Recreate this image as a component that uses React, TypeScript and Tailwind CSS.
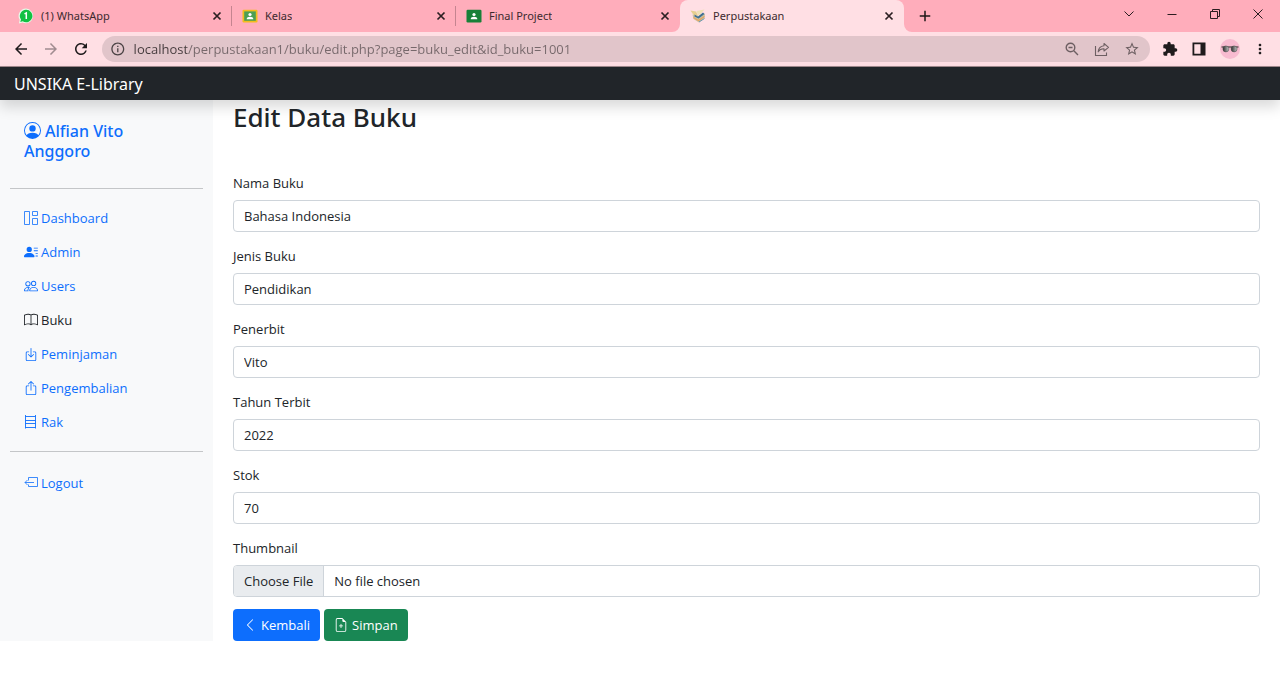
import React, { useState } from "react";
import {
  BsPersonCircle,
  BsPersonLinesFill,
  BsPeople,
  BsBook,
  BsBoxArrowInDown,
  BsBoxArrowUp,
  BsChevronLeft,
  BsFileEarmarkPlus,
} from "react-icons/bs";
import {
  MdArrowBack,
  MdArrowForward,
  MdRefresh,
  MdInfoOutline,
  MdStarBorder,
  MdExtension,
  MdMoreVert,
  MdAdd,
} from "react-icons/md";

function WhatsAppIcon() {
  return (
    <svg viewBox="0 0 16 16" className="size-4 shrink-0" aria-hidden="true">
      <path d="M8 .6A7.3 7.3 0 1 1 4.6 14.5L.9 15.4l.8-3.7A7.3 7.3 0 0 1 8 .6z" fill="#e9f9ea" />
      <path d="M8 1.7A6.3 6.3 0 1 1 4.7 13.3L2.3 14l.7-2.4A6.3 6.3 0 0 1 8 1.7z" fill="#12c143" />
      <path d="M6.500 5.900 8.300 4.900V11" fill="none" stroke="#fff" strokeWidth="1.500" />
    </svg>
  );
}

function ClassroomIcon({ framed }: { framed?: boolean }) {
  return (
    <svg viewBox="0 0 16 16" className="size-4 shrink-0" aria-hidden="true">
      <rect x="0.500" y="1.700" width="15" height="12.800" rx="1.200" fill={framed ? "#f1bd1c" : "#188038"} />
      {framed && <rect x="2.200" y="3.400" width="11.600" height="9.400" fill="#4c9f55" />}
      <circle cx="8" cy="6.500" r="1.600" fill="#fff" />
      <path d="M4.700 11.200c0-1.700 1.500-2.400 3.300-2.400s3.300.7 3.300 2.400z" fill="#fff" />
    </svg>
  );
}

function BooksIcon() {
  return (
    <svg viewBox="0 0 16 16" className="size-4 shrink-0" aria-hidden="true">
      <path d="M.5 2.500 6 3.500l2.500 5-5-1.500z" fill="#e6cf8f" />
      <path d="M2.500 6.500 8 9.500 15 5.500l-.5 4.500L9 14.500 3.500 11z" fill="#c9bfa0" />
      <path d="M4.500 6.500 8 8.500l5-4 1.500 1.500L8.500 10.500 4.500 8.500z" fill="#3d6f92" />
      <path d="M6.500 3 14.500 1.500 10.500 6 8 7.500z" fill="#efe0b4" />
      <path d="M3.500 9.500 8.500 12.500 14.500 8.500" fill="none" stroke="#e5a460" strokeWidth="1.200" />
      <path d="M9 14 14.500 10.500" stroke="#6797b0" strokeWidth="1" />
    </svg>
  );
}

function CloseIcon() {
  return (
    <svg viewBox="0 0 14 14" className="size-3.5" fill="none" stroke="currentColor" strokeWidth="1.700" aria-hidden="true">
      <path d="M3.500 3.500l7 7M10.500 3.500l-7 7" />
    </svg>
  );
}

function DashboardIcon() {
  return (
    <svg viewBox="0 0 14 14" className="size-3.5" fill="none" stroke="currentColor" aria-hidden="true">
      <path d="M.5.500h5v13h-5zM8.500.500h5v4h-5zM8.500 7.500h5v6h-5z" strokeWidth=".8" />
    </svg>
  );
}

function RackIcon() {
  return (
    <svg viewBox="0 0 14 14" className="size-3.5" fill="none" stroke="currentColor" aria-hidden="true">
      <path d="M1.500 0v13.500M11.500 0v13.500M1.500 1.500h10M1.500 5.500h10M1.500 8.500h10M1.500 12.500h10" strokeWidth=".9" />
    </svg>
  );
}

function LogoutIcon() {
  return (
    <svg viewBox="0 0 14 14" className="size-3.5" fill="none" stroke="currentColor" strokeWidth=".8" aria-hidden="true">
      <path d="M4.500 4.500v-3h9v9h-9v-2M10 6.500H1M3.500 4 1 6.500 3.500 9" />
    </svg>
  );
}

function ZoomOutIcon() {
  return (
    <svg viewBox="0 0 16 16" className="size-4" fill="none" stroke="currentColor" strokeWidth="1.400" aria-hidden="true">
      <circle cx="6.500" cy="6.500" r="4.300" />
      <path d="M9.800 9.800 14 14M4.500 6.500h4" />
    </svg>
  );
}

function ShareIcon() {
  return (
    <svg viewBox="0 0 16 16" className="size-4" fill="none" stroke="currentColor" strokeWidth="1.100" aria-hidden="true">
      <path d="M1.500 5v9.500h11v-3" />
      <path d="M10 2.500 14.500 6.300 10 10V7.800C7.200 7.700 5.500 8.600 4.200 10.800c.2-3.300 2.200-5.700 5.800-6.100z" strokeLinejoin="round" />
    </svg>
  );
}

function AvatarIcon() {
  return (
    <svg viewBox="0 0 20 20" className="size-5" aria-hidden="true">
      <defs>
        <linearGradient id="lens" x1="0" x2="1">
          <stop offset="0" stopColor="#2b2b2b" />
          <stop offset="1" stopColor="#c5c5c5" />
        </linearGradient>
      </defs>
      <circle cx="10" cy="10" r="10" fill="#f8bbd0" />
      <path d="M1.500 8h17" stroke="#222" strokeWidth="1" />
      <circle cx="5.900" cy="9.900" r="3" fill="url(#lens)" stroke="#444" strokeWidth=".5" />
      <circle cx="14.100" cy="9.900" r="3" fill="url(#lens)" stroke="#444" strokeWidth=".5" />
    </svg>
  );
}

function Corner({ flip }: { flip?: boolean }) {
  return (
    <svg
      viewBox="0 0 8 8"
      className={flip ? "absolute bottom-0 left-full size-2 -scale-x-100" : "absolute right-full bottom-0 size-2"}
      aria-hidden="true"
    >
      <path d="M8 0v8H0a8 8 0 0 0 8-8z" fill="#ffdfe4" />
    </svg>
  );
}

const tabs = [
  { title: "(1) WhatsApp", icon: <WhatsAppIcon />, active: false, divider: true },
  { title: "Kelas", icon: <ClassroomIcon framed />, active: false, divider: true },
  { title: "Final Project", icon: <ClassroomIcon />, active: false, divider: false },
  { title: "Perpustakaan", icon: <BooksIcon />, active: true, divider: false },
];

function TabStrip() {
  return (
    <div className="flex h-8 items-stretch bg-[#ffadbb] pl-2 text-[#3c2a2e]">
      {tabs.map((tab) => (
        <div
          key={tab.title}
          className={
            tab.active
              ? "relative flex w-56 items-center rounded-t-lg bg-[#ffdfe4] px-2"
              : "relative flex w-56 items-center px-2"
          }
        >
          {tab.active && <Corner />}
          {tab.active && <Corner flip />}
          <button className="flex min-w-0 flex-1 items-center gap-[7px] pl-0.5 text-[11px] leading-4">
            {tab.icon}
            <span className="truncate">{tab.title}</span>
          </button>
          <button aria-label={"Close " + tab.title} className="text-[#2b1f22]">
            <CloseIcon />
          </button>
          {tab.divider && <span className="absolute top-1.5 right-0 h-5 w-px bg-[#c58490]" />}
        </div>
      ))}
      <button aria-label="New tab" className="ml-3 text-[#1f1718]">
        <MdAdd className="size-[18px]" />
      </button>
      <div className="ml-auto flex items-center gap-[31px] pr-4 pb-1 text-[#2b1d20]">
        <button aria-label="Search tabs">
          <svg viewBox="0 0 12 12" className="size-3" fill="none" stroke="currentColor">
            <path d="M1.500 3.500 6 8 10.500 3.500" />
          </svg>
        </button>
        <button aria-label="Minimize">
          <svg viewBox="0 0 12 12" className="size-3" fill="none" stroke="currentColor">
            <path d="M1.500 6.500h9" />
          </svg>
        </button>
        <button aria-label="Restore">
          <svg viewBox="0 0 12 12" className="size-3" fill="none" stroke="currentColor">
            <path d="M1.500 3.500h7v7h-7zM3.500 3.500v-2h7v7h-2" />
          </svg>
        </button>
        <button aria-label="Close window">
          <svg viewBox="0 0 12 12" className="size-3" fill="none" stroke="currentColor">
            <path d="M1.500 1.500l9 9M10.500 1.500l-9 9" />
          </svg>
        </button>
      </div>
    </div>
  );
}

function Toolbar() {
  const [url, setUrl] = useState("localhost/perpustakaan1/buku/edit.php?page=buku_edit&id_buku=1001");
  return (
    <div className="flex h-[35px] items-center border-b border-[#a0888c] bg-[#ffdfe4] px-3 text-[#1f1b1c]">
      <div className="flex gap-3">
        <button aria-label="Back">
          <MdArrowBack className="size-[18px]" />
        </button>
        <button aria-label="Forward" className="text-[#a08c90]">
          <MdArrowForward className="size-[18px]" />
        </button>
        <button aria-label="Reload">
          <MdRefresh className="size-[18px]" />
        </button>
      </div>
      <div className="mx-3 flex h-[26px] flex-1 items-center gap-[14px] rounded-full bg-[#e1c5ca] pr-2.5 pl-2 text-[#6d5f62]">
        <div className="flex flex-1 items-center gap-2">
          <MdInfoOutline className="size-4 text-[#4a4244]" />
          <input
            aria-label="Address"
            value={url}
            onChange={(e) => setUrl(e.target.value)}
            className="w-full bg-[linear-gradient(90deg,#43393b_53px,#76686b_53px)] bg-clip-text font-['Open_Sans',sans-serif] text-[13px] leading-4 text-transparent outline-none"
          />
        </div>
        <button aria-label="Zoom">
          <ZoomOutIcon />
        </button>
        <button aria-label="Share">
          <ShareIcon />
        </button>
        <button aria-label="Bookmark">
          <MdStarBorder className="size-4" />
        </button>
      </div>
      <div className="flex items-center gap-3">
        <button aria-label="Extensions">
          <MdExtension className="size-4" />
        </button>
        <button aria-label="Side panel" className="px-0.5">
          <svg viewBox="0 0 14 14" className="size-3.5" aria-hidden="true">
            <path d="M.5.500h13v13H.5zM2.300 2.300v9.400h6.200V2.300z" fill="currentColor" fillRule="evenodd" />
          </svg>
        </button>
        <button aria-label="Profile">
          <AvatarIcon />
        </button>
        <button aria-label="Menu">
          <MdMoreVert className="size-4" />
        </button>
      </div>
    </div>
  );
}

const menu = [
  { label: "Dashboard", icon: <DashboardIcon /> },
  { label: "Admin", icon: <BsPersonLinesFill className="size-3.5" /> },
  { label: "Users", icon: <BsPeople className="size-3.5" /> },
  { label: "Buku", icon: <BsBook className="size-3.5" />, current: true },
  { label: "Peminjaman", icon: <BsBoxArrowInDown className="size-3.5" /> },
  { label: "Pengembalian", icon: <BsBoxArrowUp className="size-3.5" /> },
  { label: "Rak", icon: <RackIcon /> },
];

function Sidebar() {
  return (
    <aside className="w-[213px] shrink-0 bg-[#f8f9fa] px-2.5 text-[#0d6efd]">
      <h2 className="px-3.5 pt-[21px] pb-[27px] text-[16px] leading-5 font-medium">
        <a href="#profile">
          <BsPersonCircle className="mr-1 inline size-[17px] align-[-2px]" />
          Alfian Vito Anggoro
        </a>
      </h2>
      <hr className="border-[#c4c6c8]" />
      <nav className="flex flex-col py-3 font-['Open_Sans',sans-serif] text-[13px] leading-5">
        {menu.map((item) => (
          <a
            key={item.label}
            href={"#" + item.label.toLowerCase()}
            className={
              item.current
                ? "flex h-[34px] items-center gap-[3px] px-3.5 text-[#212529]"
                : "flex h-[34px] items-center gap-[3px] px-3.5"
            }
          >
            {item.icon}
            {item.label}
          </a>
        ))}
      </nav>
      <hr className="border-[#c4c6c8]" />
      <nav className="py-3.5 font-['Open_Sans',sans-serif] text-[13px] leading-5">
        <a href="#logout" className="flex h-[34px] items-center gap-[3px] px-3.5">
          <LogoutIcon />
          Logout
        </a>
      </nav>
    </aside>
  );
}

const fields = [
  { id: "nama", label: "Nama Buku", value: "Bahasa Indonesia" },
  { id: "jenis", label: "Jenis Buku", value: "Pendidikan" },
  { id: "penerbit", label: "Penerbit", value: "Vito" },
  { id: "tahun", label: "Tahun Terbit", value: "2022" },
  { id: "stok", label: "Stok", value: "70" },
];

function EditForm() {
  return (
    <form
      className="flex flex-col font-['Open_Sans',sans-serif] text-[13px] leading-5"
      onSubmit={(e) => e.preventDefault()}
    >
      {fields.map((f) => (
        <div key={f.id} className="mb-3.5 flex flex-col gap-[7px]">
          <label htmlFor={f.id}>{f.label}</label>
          <input
            id={f.id}
            defaultValue={f.value}
            className="h-8 rounded border border-[#ced4da] bg-white px-2.5 outline-none"
          />
        </div>
      ))}
      <div className="mb-3 flex flex-col gap-[7px]">
        <label htmlFor="thumbnail">Thumbnail</label>
        <input
          id="thumbnail"
          type="file"
          className="h-8 rounded border border-[#ced4da] bg-white file:mr-2.5 file:h-[30px] file:border-0 file:border-r file:border-solid file:border-[#ced4da] file:bg-[#e9ecef] file:px-2.5 file:text-[#212529]"
        />
      </div>
      <div className="flex gap-1 text-white">
        <button type="button" className="flex h-8 items-center gap-1 rounded bg-[#0d6efd] px-2.5">
          <BsChevronLeft className="size-3.5" />
          Kembali
        </button>
        <button type="submit" className="flex h-8 items-center gap-1 rounded bg-[#198754] px-2.5">
          <BsFileEarmarkPlus className="size-3.5" />
          Simpan
        </button>
      </div>
    </form>
  );
}

export default function App() {
  return (
    <div className="min-h-screen bg-white font-['Noto_Sans','Open_Sans',sans-serif] text-[#212529]">
      <TabStrip />
      <Toolbar />
      <header className="relative flex h-[33px] items-center bg-[#212529] px-3.5 shadow-[0_7px_14px_rgba(0,0,0,0.15)]">
        <a href="#home" className="text-[16px] leading-6 text-white">
          UNSIKA E-Library
        </a>
      </header>
      <div className="flex">
        <Sidebar />
        <main className="min-w-0 flex-1 px-5">
          <h1 className="pb-[39px] text-[26px] leading-[34px] font-medium">Edit Data Buku</h1>
          <EditForm />
        </main>
      </div>
    </div>
  );
}
